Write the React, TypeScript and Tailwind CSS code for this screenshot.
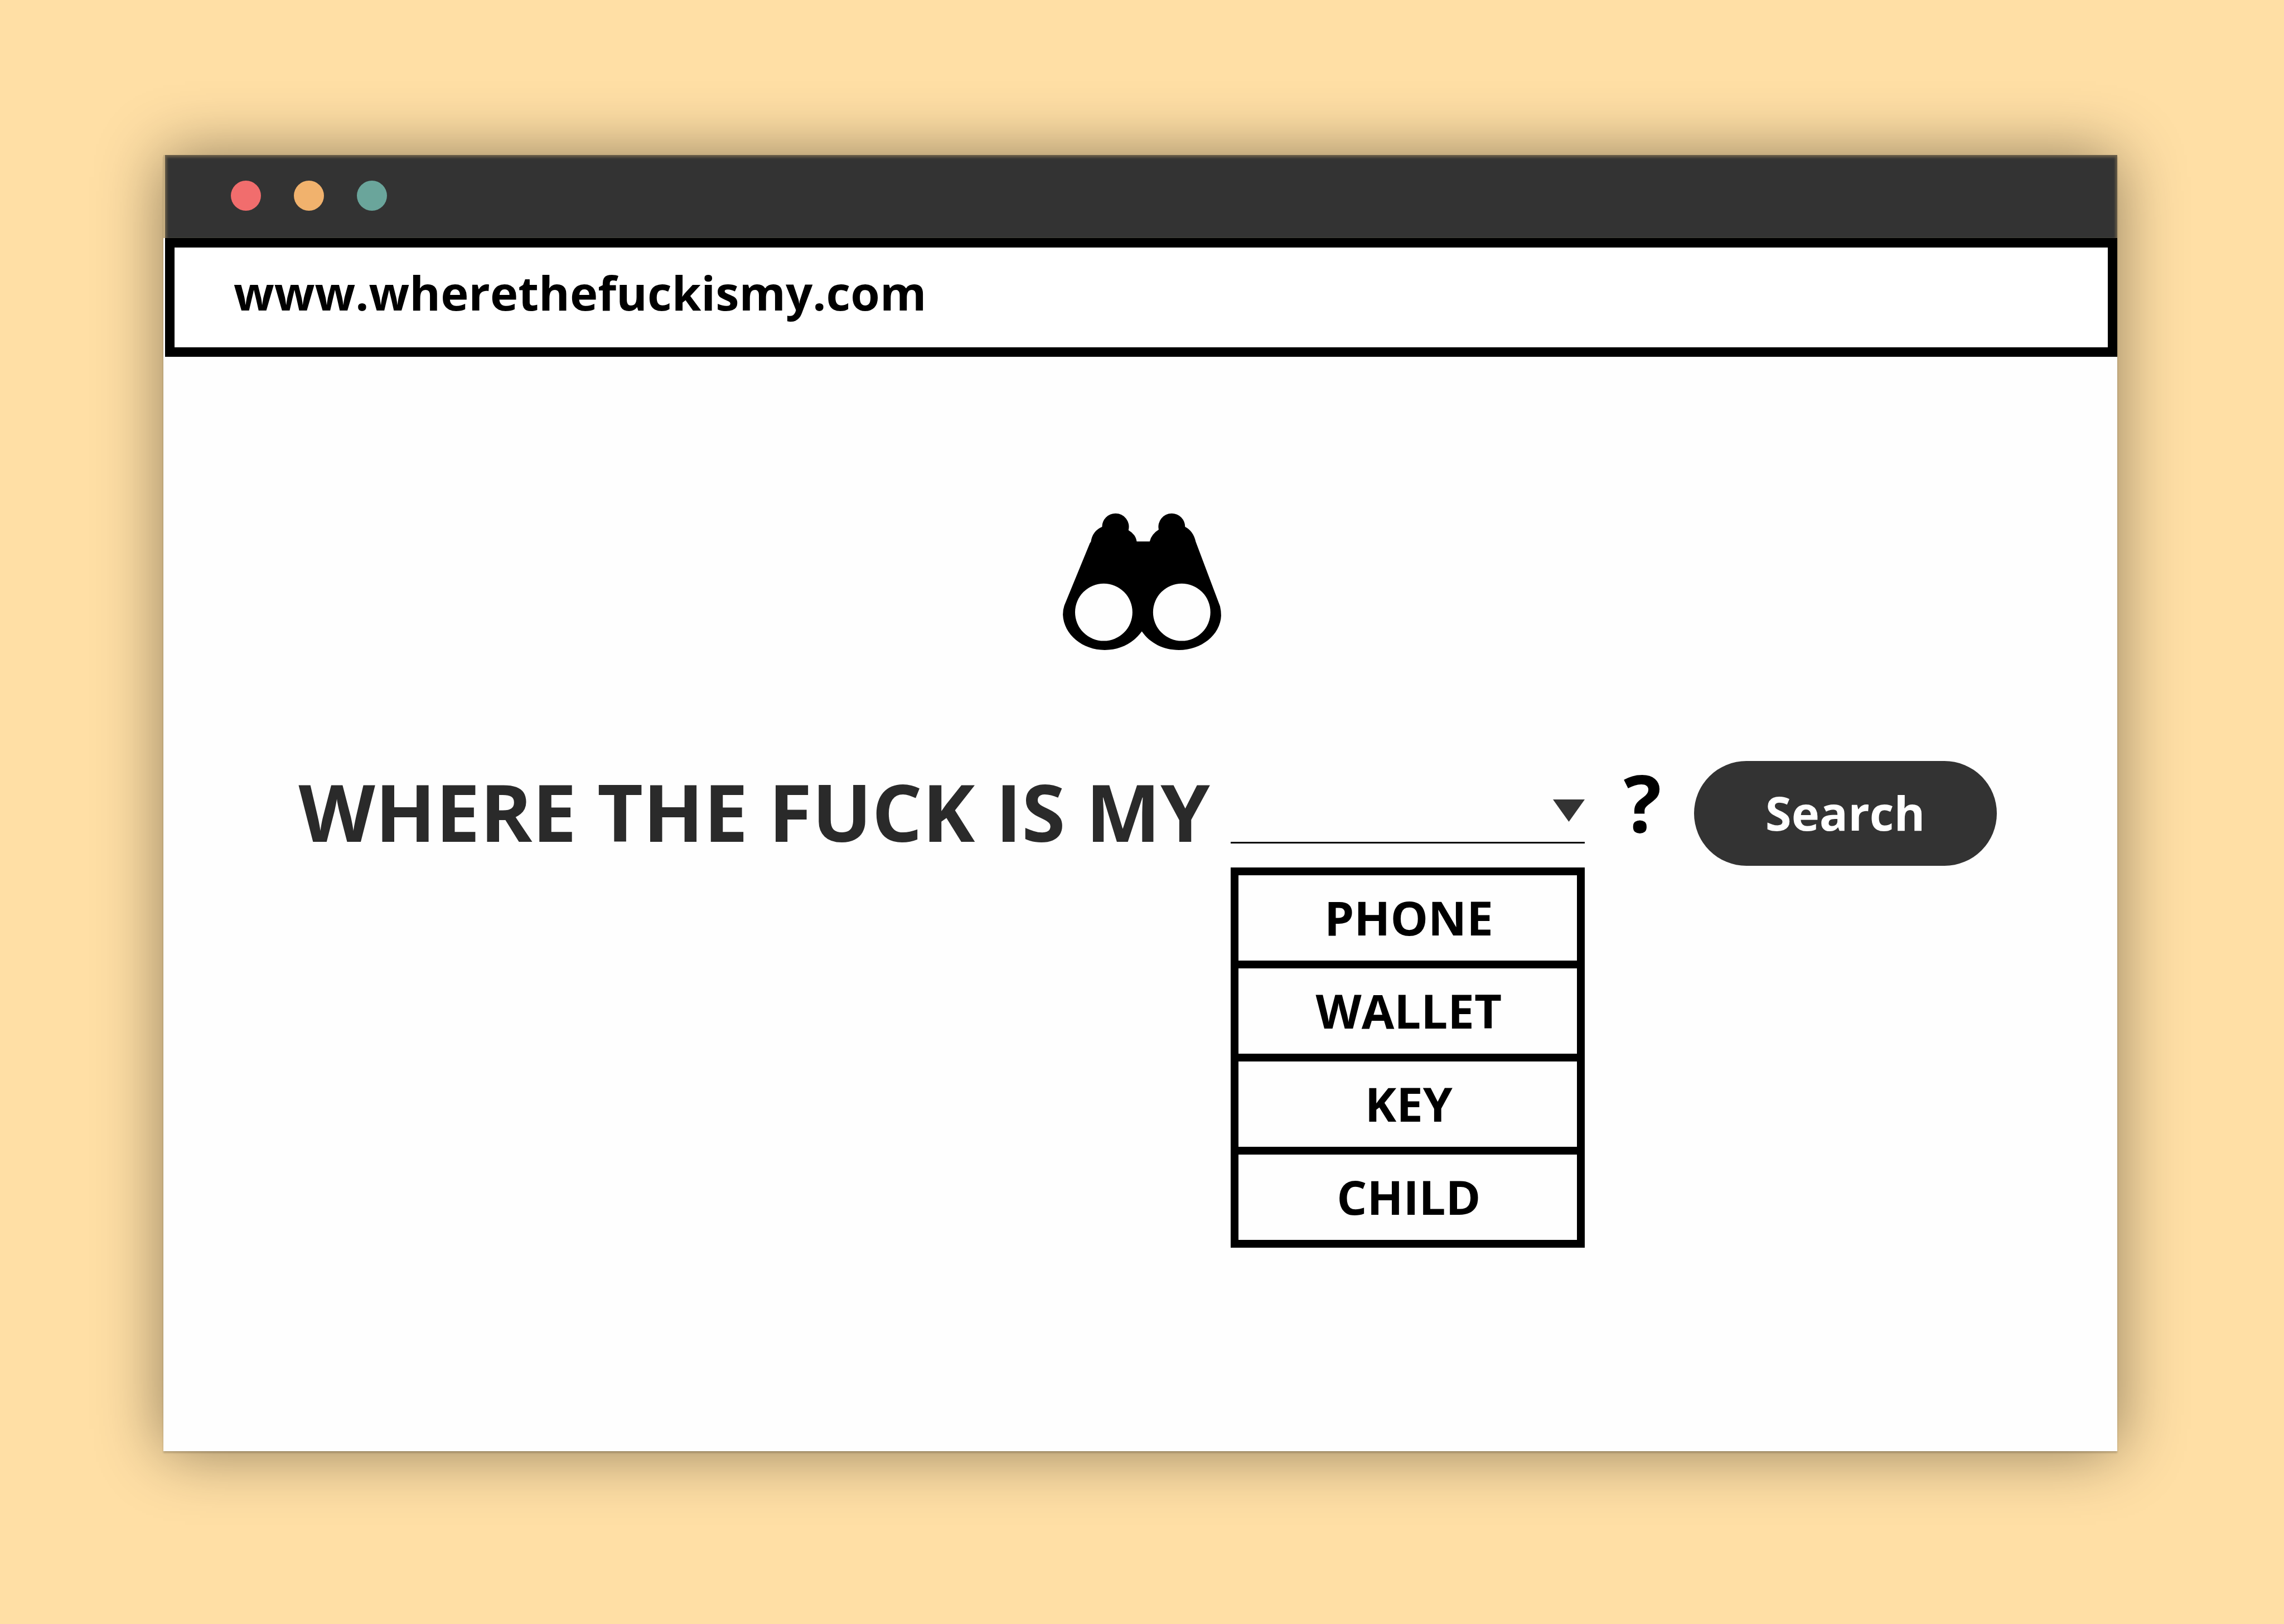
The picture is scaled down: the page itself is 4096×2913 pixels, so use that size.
import { useState } from "react";

const ITEMS = ["PHONE", "WALLET", "KEY", "CHILD"];

function TitleBar() {
  return (
    <header className="ml-[3px] flex h-[149px] items-center gap-[59px] bg-[#333333] pb-[3px] pl-[118px] shadow-[inset_0_6px_4px_-2px_#6b5f4a,inset_5px_0_4px_-2px_#6b5f4a,inset_-5px_0_4px_-2px_#6b5f4a]">
      <span className="size-[54px] rounded-full bg-[#f16d6d]" />
      <span className="size-[54px] rounded-full bg-[#f1b26d]" />
      <span className="size-[54px] rounded-full bg-[#6aa59b]" />
    </header>
  );
}

function AddressBar() {
  return (
    <div className="bg-white pl-[3px]">
      <input
        type="text"
        aria-label="Address"
        defaultValue="www.wherethefuckismy.com"
        className="block h-[213px] w-full border-[17px] border-black bg-white pb-[19px] pl-[106px] text-[85px] font-bold text-black outline-none"
      />
    </div>
  );
}

function Binoculars() {
  return (
    <svg viewBox="150 124 900 777" className="h-[245px] w-[284px]" aria-hidden="true">
      <path
        fillRule="evenodd"
        d="M373 200 A75.5 75.5 0 0 1 449 124 A75.5 75.5 0 0 1 523 219 Q564 243 570 283 H644 Q654 241 695 216 A75.5 75.5 0 0 1 769 124 A75.5 75.5 0 0 1 845 200 Q892 223 906 286 L1044 652 Q1050 678 1050 705 C1046 815 937 901 810 901 C722 901 645 862 599 795 C551 862 475 901 388 901 C263 901 155 815 150 700 Q150 672 158 648 L304 292 L309 286 Q318 223 373 200 Z M382.500 523 A163 163 0 1 0 382.500 849 A163 163 0 1 0 382.500 523 Z M826 523 A163 163 0 1 0 826 849 A163 163 0 1 0 826 523 Z"
      />
    </svg>
  );
}

function ItemPicker() {
  const [item, setItem] = useState("");
  return (
    <div className="relative ml-[37px] w-[635px]">
      <select
        id="item"
        value={item}
        onChange={(e) => setItem(e.target.value)}
        className="block h-[148px] w-full appearance-none border-b-[3px] border-black bg-transparent pr-[72px] text-[85px] font-bold outline-none"
      >
        <option value="" />
        {ITEMS.map((name) => (
          <option key={name}>{name}</option>
        ))}
      </select>
      <svg
        viewBox="0 0 57 40"
        className="pointer-events-none absolute right-0 bottom-[39px] h-[40px] w-[57px]"
        aria-hidden="true"
      >
        <path d="M0 0H57L28.500 40Z" fill="#333333" />
      </svg>
      <ul className="absolute top-full left-0 mt-[43px] w-full border-x-[14px] border-t-[14px] border-black">
        {ITEMS.map((name) => (
          <li key={name} className="border-b-[14px] border-black">
            <button
              type="button"
              onClick={() => setItem(name)}
              className="block h-[153px] w-full pb-[2px] pl-[4px] text-center text-[85px] leading-none font-bold"
            >
              {name}
            </button>
          </li>
        ))}
      </ul>
    </div>
  );
}

export default function App() {
  return (
    <div className="flex min-h-screen flex-col bg-[#ffdfa5] pt-[278px] pr-[299px] pb-[310px] pl-[293px] font-['Open_Sans',sans-serif] text-black">
      <div className="flex flex-1 flex-col bg-[#c9b081] shadow-[0_0_110px_rgba(0,0,0,0.44),0_3px_3px_rgba(0,0,0,0.2)]">
        <TitleBar />
        <AddressBar />
        <main className="flex flex-1 flex-col items-center bg-[#fefefe] pt-[281px] pl-[6px]">
          <Binoculars />
          <form
            onSubmit={(e) => e.preventDefault()}
            className="mt-[199px] flex items-start justify-center pl-[20px] whitespace-nowrap"
          >
            <h1 className="text-[142px] leading-[180px] font-bold text-[#2a2a2a]">
              <label htmlFor="item">WHERE THE FUCK IS MY</label>
            </h1>
            <ItemPicker />
            <span className="ml-[70px] text-[142px] leading-[146px] font-bold">?</span>
            <button
              type="submit"
              className="ml-[58px] h-[188px] w-[543px] rounded-full bg-[#333333] pb-[3px] text-[85px] leading-none font-bold text-white"
            >
              Search
            </button>
          </form>
        </main>
      </div>
    </div>
  );
}
